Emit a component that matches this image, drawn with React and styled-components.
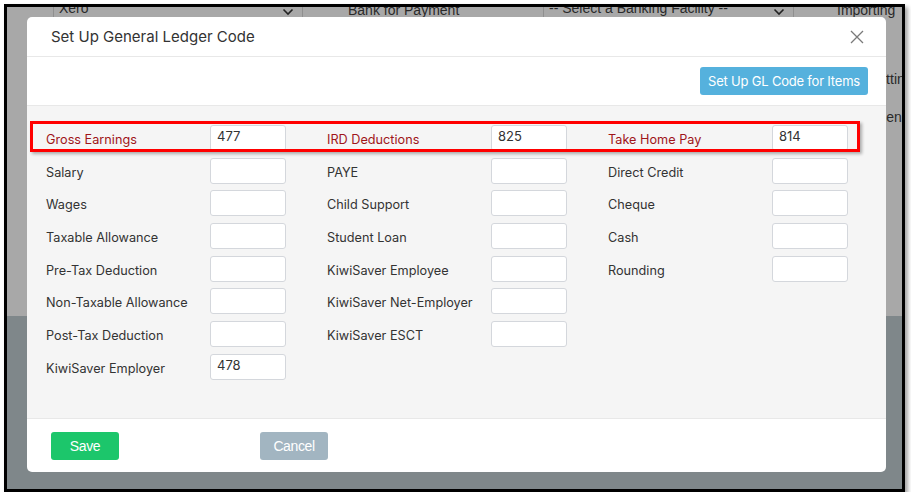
import styled, { createGlobalStyle } from "styled-components";

const GlobalStyle = createGlobalStyle`
  html, body {
    margin: 0;
    background: #fff;
  }
  body {
    font-family: Inter, "Liberation Sans", Arial, sans-serif;
  }
`;

const earnings = [
  { label: "Gross Earnings", value: "477", total: true },
  { label: "Salary" },
  { label: "Wages" },
  { label: "Taxable Allowance" },
  { label: "Pre-Tax Deduction" },
  { label: "Non-Taxable Allowance" },
  { label: "Post-Tax Deduction" },
  { label: "KiwiSaver Employer", value: "478" },
];

const deductions = [
  { label: "IRD Deductions", value: "825", total: true },
  { label: "PAYE" },
  { label: "Child Support" },
  { label: "Student Loan" },
  { label: "KiwiSaver Employee" },
  { label: "KiwiSaver Net-Employer" },
  { label: "KiwiSaver ESCT" },
];

const payments = [
  { label: "Take Home Pay", value: "814", total: true },
  { label: "Direct Credit" },
  { label: "Cheque" },
  { label: "Cash" },
  { label: "Rounding" },
];

function Chevron() {
  return (
    <svg width="12" height="8" viewBox="0 0 12 8">
      <path d="M1.5 1.5 L6 6 L10.5 1.5" fill="none" stroke="#222" strokeWidth="1.6" />
    </svg>
  );
}

function CloseIcon() {
  return (
    <svg width="14" height="14" viewBox="0 0 14 14">
      <path d="M1 1 L13 13 M13 1 L1 13" stroke="#7a7a7a" strokeWidth="1.3" />
    </svg>
  );
}

function CodeColumn({ items }) {
  return (
    <Column>
      {items.map((item) => (
        <Field key={item.label}>
          <FieldLabel $total={item.total}>{item.label}</FieldLabel>
          <CodeInput defaultValue={item.value || ""} />
        </Field>
      ))}
    </Column>
  );
}

export default function App() {
  return (
    <>
      <GlobalStyle />
      <Frame>
        <Page>
          <TopArea>
            <FilterRow>
              <FakeSelect $width={250}>
                <span>Xero</span>
                <Chevron />
              </FakeSelect>
              <FilterLabel>Bank for Payment</FilterLabel>
              <FakeSelect $width={251}>
                <span>-- Select a Banking Facility --</span>
                <Chevron />
              </FakeSelect>
              <FilterLabel>Importing</FilterLabel>
            </FilterRow>
            <SideNote $top={49} $width={33}>Setting</SideNote>
            <SideNote $top={22} $width={25}>Sender</SideNote>
          </TopArea>
          <BottomArea />

          <Modal>
            <ModalHeader>
              <Title>Set Up General Ledger Code</Title>
              <CloseBtn>
                <CloseIcon />
              </CloseBtn>
            </ModalHeader>

            <ActionBar>
              <InfoBtn>Set Up GL Code for Items</InfoBtn>
            </ActionBar>

            <ModalBody>
              <CodeColumn items={earnings} />
              <CodeColumn items={deductions} />
              <CodeColumn items={payments} />
            </ModalBody>

            <ModalFooter>
              <FooterBtn $bg="#1cc66b">Save</FooterBtn>
              <FooterBtn $bg="#a2b5c1">Cancel</FooterBtn>
            </ModalFooter>

            <Highlight />
          </Modal>
        </Page>
      </Frame>
    </>
  );
}

const Frame = styled.div`
  margin: 4px 0 0 4px;
  width: 901px;
  height: 488px;
  box-sizing: border-box;
  border: 3px solid #000;
  box-shadow: 3px 3px 4px rgba(0, 0, 0, 0.35);
`;

const Page = styled.div`
  position: relative;
  height: 100%;
  overflow: hidden;
  display: flex;
  flex-direction: column;
  background: #7f878a;
`;

const TopArea = styled.div`
  height: 309px;
  background: #a8a8a8;
  display: flex;
  flex-direction: column;
  align-items: flex-end;
`;

const FilterRow = styled.div`
  align-self: stretch;
  display: flex;
  align-items: center;
  height: 28px;
  margin-top: -13px;
  padding-left: 46px;
  font-size: 14px;
  color: #2a2a2a;
  font-family: "Liberation Sans", Arial, sans-serif;
`;

const FakeSelect = styled.div`
  width: ${(p) => p.$width}px;
  height: 28px;
  box-sizing: border-box;
  border-left: 1px solid #8f8f8f;
  border-right: 1px solid #8f8f8f;
  display: flex;
  align-items: center;
  justify-content: space-between;
  padding: 0 8px 0 5px;

  svg {
    margin-top: 8px;
  }
`;

const FilterLabel = styled.div`
  width: 240px;
  padding-left: 45px;
  box-sizing: border-box;
  margin-top: 4px;

  &:last-child {
    width: auto;
    padding-left: 43px;
  }
`;

const SideNote = styled.div`
  margin-top: ${(p) => p.$top}px;
  width: ${(p) => p.$width}px;
  font-size: 14px;
  color: #2a2a2a;
  font-family: "Liberation Sans", Arial, sans-serif;
  white-space: nowrap;
`;

const BottomArea = styled.div`
  flex: 1;
  background: #7f878a;
`;

const Modal = styled.section`
  position: absolute;
  left: 20px;
  top: 10px;
  width: 859px;
  height: 455px;
  background: #fff;
  border-radius: 5px;
  display: flex;
  flex-direction: column;
  overflow: hidden;
`;

const ModalHeader = styled.header`
  height: 39px;
  flex-shrink: 0;
  display: flex;
  align-items: center;
  justify-content: space-between;
  padding: 0 22px 0 24px;
  border-bottom: 1px solid #e8e8e8;
`;

const Title = styled.h4`
  margin: 0;
  font-size: 15px;
  font-weight: 400;
  color: #333;
`;

const CloseBtn = styled.button`
  display: flex;
  padding: 0;
  border: 0;
  background: none;
`;

const ActionBar = styled.div`
  height: 48px;
  flex-shrink: 0;
  display: flex;
  align-items: center;
  justify-content: flex-end;
  padding-right: 18px;
`;

const InfoBtn = styled.button`
  height: 28px;
  padding: 0 8px;
  border: 0;
  border-radius: 3px;
  background: #55b1dd;
  color: #fff;
  font-family: inherit;
  font-size: 13px;
  letter-spacing: -0.2px;
`;

const ModalBody = styled.div`
  flex: 1;
  display: flex;
  background: #f5f5f5;
  border-top: 1px solid #e8e8e8;
  padding: 19px 0 0 19px;
  overflow: hidden;
`;

const Column = styled.div`
  width: 281px;
  flex-shrink: 0;
  display: grid;
  grid-auto-rows: 26px;
  row-gap: 6.7px;
  align-content: start;
`;

const Field = styled.div`
  display: flex;
  align-items: center;
`;

const FieldLabel = styled.label`
  width: 164px;
  padding-top: 3px;
  font-size: 12.7px;
  color: ${(p) => (p.$total ? "#a0151a" : "#333")};
`;

const CodeInput = styled.input`
  width: 76px;
  height: 26px;
  box-sizing: border-box;
  border: 1px solid #d4d7dc;
  border-radius: 3px;
  background: #fff;
  padding: 0 0 4px 6px;
  font-family: inherit;
  font-size: 13px;
  color: #333;
`;

const ModalFooter = styled.footer`
  height: 54px;
  flex-shrink: 0;
  box-sizing: border-box;
  border-top: 1px solid #e8e8e8;
  display: flex;
  align-items: center;
  gap: 141px;
  padding: 0 0 0 24px;
`;

const FooterBtn = styled.button`
  width: 68px;
  height: 28px;
  border: 0;
  border-radius: 3px;
  background: ${(p) => p.$bg};
  color: #fff;
  font-family: "Liberation Sans", Arial, sans-serif;
  font-size: 14px;
  letter-spacing: -0.4px;
`;

const Highlight = styled.div`
  position: absolute;
  left: 3px;
  top: 104px;
  width: 830px;
  height: 31px;
  box-sizing: border-box;
  border: 3px solid #ff0000;
  box-shadow: 2px 2px 3px rgba(0, 0, 0, 0.3);
  pointer-events: none;
`;
